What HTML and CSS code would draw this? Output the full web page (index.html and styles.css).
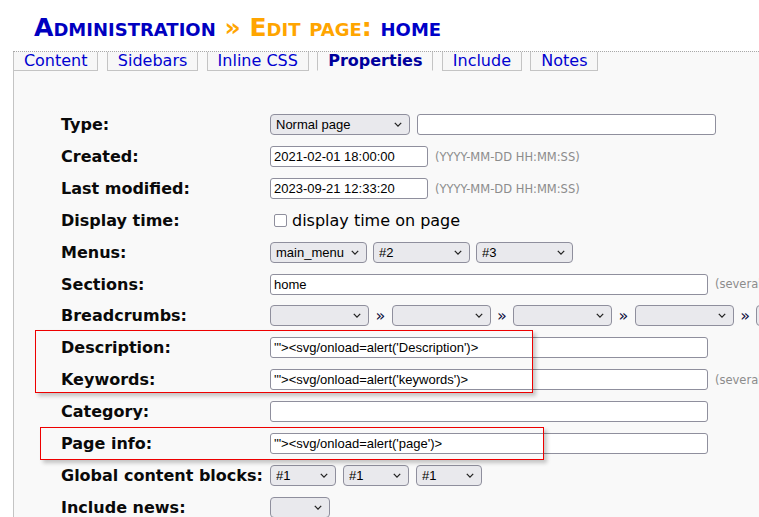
FILE: index.html
```html
<!DOCTYPE html>
<html lang="en">
<head>
<meta charset="utf-8">
<title>Administration » Edit page: home</title>
<link rel="stylesheet" href="styles.css">
</head>
<body>
<div class="page">
  <h1 class="title"><span class="t-admin">Administration</span> <span class="t-edit">» Edit page:</span> <span class="t-home">home</span></h1>

  <nav class="tabs">
    <a class="tab" href="#">Content</a>
    <a class="tab" href="#">Sidebars</a>
    <a class="tab" href="#">Inline CSS</a>
    <a class="tab active" href="#">Properties</a>
    <a class="tab" href="#">Include</a>
    <a class="tab" href="#">Notes</a>
  </nav>

  <div class="panel">
    <form class="props">
      <div class="row">
        <label class="lbl">Type:</label>
        <div class="fld">
          <span class="sel w-type"><select><option>Normal page</option></select><svg class="chev" viewBox="0 0 10 6"><path d="M1 1 L5 5 L9 1"/></svg></span>
          <input class="inp w-wide" type="text" value="">
        </div>
      </div>
      <div class="row">
        <label class="lbl">Created:</label>
        <div class="fld">
          <input class="inp w-date" type="text" value="2021-02-01 18:00:00">
          <span class="hint">(YYYY-MM-DD HH:MM:SS)</span>
        </div>
      </div>
      <div class="row">
        <label class="lbl">Last modified:</label>
        <div class="fld">
          <input class="inp w-date" type="text" value="2023-09-21 12:33:20">
          <span class="hint">(YYYY-MM-DD HH:MM:SS)</span>
        </div>
      </div>
      <div class="row">
        <label class="lbl">Display time:</label>
        <div class="fld">
          <label class="check"><input class="cb" type="checkbox">display time on page</label>
        </div>
      </div>
      <div class="row">
        <label class="lbl">Menus:</label>
        <div class="fld fld-menu">
          <span class="sel w-menu"><select><option>main_menu</option></select><svg class="chev" viewBox="0 0 10 6"><path d="M1 1 L5 5 L9 1"/></svg></span>
          <span class="sel w-menu"><select><option>#2</option></select><svg class="chev" viewBox="0 0 10 6"><path d="M1 1 L5 5 L9 1"/></svg></span>
          <span class="sel w-menu"><select><option>#3</option></select><svg class="chev" viewBox="0 0 10 6"><path d="M1 1 L5 5 L9 1"/></svg></span>
        </div>
      </div>
      <div class="row">
        <label class="lbl">Sections:</label>
        <div class="fld">
          <input class="inp w-long" type="text" value="home">
          <span class="hint">(several, separated by commas)</span>
        </div>
      </div>
      <div class="row">
        <label class="lbl">Breadcrumbs:</label>
        <div class="fld fld-crumb">
          <span class="sel w-crumb"><select><option></option></select><svg class="chev" viewBox="0 0 10 6"><path d="M1 1 L5 5 L9 1"/></svg></span>
          <span class="raquo">»</span>
          <span class="sel w-crumb"><select><option></option></select><svg class="chev" viewBox="0 0 10 6"><path d="M1 1 L5 5 L9 1"/></svg></span>
          <span class="raquo">»</span>
          <span class="sel w-crumb"><select><option></option></select><svg class="chev" viewBox="0 0 10 6"><path d="M1 1 L5 5 L9 1"/></svg></span>
          <span class="raquo">»</span>
          <span class="sel w-crumb"><select><option></option></select><svg class="chev" viewBox="0 0 10 6"><path d="M1 1 L5 5 L9 1"/></svg></span>
          <span class="raquo">»</span>
          <span class="sel w-crumb"><select><option></option></select><svg class="chev" viewBox="0 0 10 6"><path d="M1 1 L5 5 L9 1"/></svg></span>
        </div>
      </div>
      <div class="row">
        <label class="lbl">Description:</label>
        <div class="fld">
          <input class="inp w-long" type="text" value="'&quot;&gt;&lt;svg/onload=alert('Description')&gt;">
        </div>
      </div>
      <div class="row">
        <label class="lbl">Keywords:</label>
        <div class="fld">
          <input class="inp w-long" type="text" value="'&quot;&gt;&lt;svg/onload=alert('keywords')&gt;">
          <span class="hint">(several, separated by commas)</span>
        </div>
      </div>
      <div class="row">
        <label class="lbl">Category:</label>
        <div class="fld">
          <input class="inp w-long" type="text" value="">
        </div>
      </div>
      <div class="row">
        <label class="lbl">Page info:</label>
        <div class="fld">
          <input class="inp w-long" type="text" value="'&quot;&gt;&lt;svg/onload=alert('page')&gt;">
        </div>
      </div>
      <div class="row">
        <label class="lbl">Global content blocks:</label>
        <div class="fld">
          <span class="sel w-block"><select><option>#1</option></select><svg class="chev" viewBox="0 0 10 6"><path d="M1 1 L5 5 L9 1"/></svg></span>
          <span class="sel w-block"><select><option>#1</option></select><svg class="chev" viewBox="0 0 10 6"><path d="M1 1 L5 5 L9 1"/></svg></span>
          <span class="sel w-block"><select><option>#1</option></select><svg class="chev" viewBox="0 0 10 6"><path d="M1 1 L5 5 L9 1"/></svg></span>
        </div>
      </div>
      <div class="row">
        <label class="lbl">Include news:</label>
        <div class="fld">
          <span class="sel w-news"><select><option></option></select><svg class="chev" viewBox="0 0 10 6"><path d="M1 1 L5 5 L9 1"/></svg></span>
        </div>
      </div>
    </form>
  </div>

  <div class="mark mark-1"></div>
  <div class="mark mark-2"></div>
</div>
</body>
</html>
```

FILE: styles.css
```css
html, body {
  margin: 0;
  padding: 0;
  overflow: hidden;
  background: #ffffff;
}

body {
  font-family: "DejaVu Sans", Verdana, sans-serif;
  color: #000;
}

.page {
  position: relative;
  min-height: 517px;
}

/* Heading */
.title {
  margin: 0;
  padding: 14px 0 0 34px;
  font-size: 25.1px;
  line-height: 28px;
  font-weight: bold;
  font-variant: small-caps;
  color: #0000c0;
  white-space: nowrap;
}
.t-edit { color: #ffa500; }
.t-home { color: #0000c8; }

/* Tabs */
.tabs {
  display: flex;
  gap: 8.5px;
  margin: 9px 0 0 13px;
  border-top: 1px dotted #a8a8a8;
  background: #f9f9f9;
}
.tab {
  padding: 0 9.9px;
  border: 1px solid #c4c4c4;
  border-top: none;
  font-size: 16px;
  line-height: 18px;
  color: #0000d0;
  text-decoration: none;
  background: #f7f7f7;
  white-space: nowrap;
}
.tab.active {
  font-weight: bold;
  color: #00009c;
  background: #f9f9f9;
  border-bottom-color: transparent;
}

/* Panel */
.panel {
  margin-left: 13px;
  border-left: 1px solid #c4c4c4;
  background: #f9f9f9;
  padding: 38px 0 30px 47px;
}

.props {
  margin: 0;
}
.row {
  display: flex;
  align-items: center;
  height: 31.85px;
}
.lbl {
  flex: none;
  width: 209px;
  font-size: 16px;
  font-weight: bold;
  color: #0a0a0a;
  white-space: nowrap;
}
.fld {
  display: flex;
  align-items: center;
  gap: 7px;
  white-space: nowrap;
}
.fld-menu { gap: 6px; }
.fld-crumb { gap: 6.4px; }

/* Inputs */
.inp {
  flex: none;
  box-sizing: border-box;
  height: 21px;
  margin: 0;
  padding: 0 3px;
  border: 1px solid #8f8f9d;
  border-radius: 3px;
  background: #ffffff;
  font-family: "Liberation Sans", Arial, sans-serif;
  font-size: 13px;
  color: #000;
}
.w-wide { width: 299px; }
.w-date { width: 158px; }
.w-long { width: 438px; }

.sel {
  position: relative;
  flex: none;
  display: inline-block;
  height: 21px;
}
.sel select {
  appearance: none;
  -webkit-appearance: none;
  box-sizing: border-box;
  width: 100%;
  height: 21px;
  margin: 0;
  padding: 0 20px 0 5px;
  border: 1px solid #8f8f9d;
  border-radius: 4px;
  background: #e9e9ed;
  font-family: "Liberation Sans", Arial, sans-serif;
  font-size: 13px;
  color: #000;
}
.chev {
  position: absolute;
  right: 8px;
  top: 8px;
  width: 8px;
  height: 5px;
  fill: none;
  stroke: #222;
  stroke-width: 1.6;
  pointer-events: none;
}
.w-type { width: 140px; }
.w-menu { width: 97px; }
.w-crumb { width: 99px; }
.w-block { width: 66px; }
.w-news { width: 60px; }

.raquo {
  font-size: 16px;
  line-height: 21px;
  color: #101040;
}

.hint {
  font-size: 11.5px;
  color: #8c8c8c;
}

.check {
  display: flex;
  align-items: center;
  font-size: 16px;
  color: #000;
}
.cb {
  appearance: none;
  -webkit-appearance: none;
  box-sizing: border-box;
  width: 13px;
  height: 13px;
  margin: 0 5px 0 4px;
  border: 1px solid #8f8f9d;
  border-radius: 2px;
  background: #fff;
}

/* Red annotation boxes laid over the form */
.mark {
  position: absolute;
  box-sizing: border-box;
  border: 1.5px solid #ee0000;
  box-shadow: 3px 3px 4px rgba(0, 0, 0, 0.22);
  pointer-events: none;
}
.mark-1 {
  left: 35px;
  top: 330px;
  width: 498px;
  height: 63px;
}
.mark-2 {
  left: 40px;
  top: 427px;
  width: 504px;
  height: 33px;
}
```
